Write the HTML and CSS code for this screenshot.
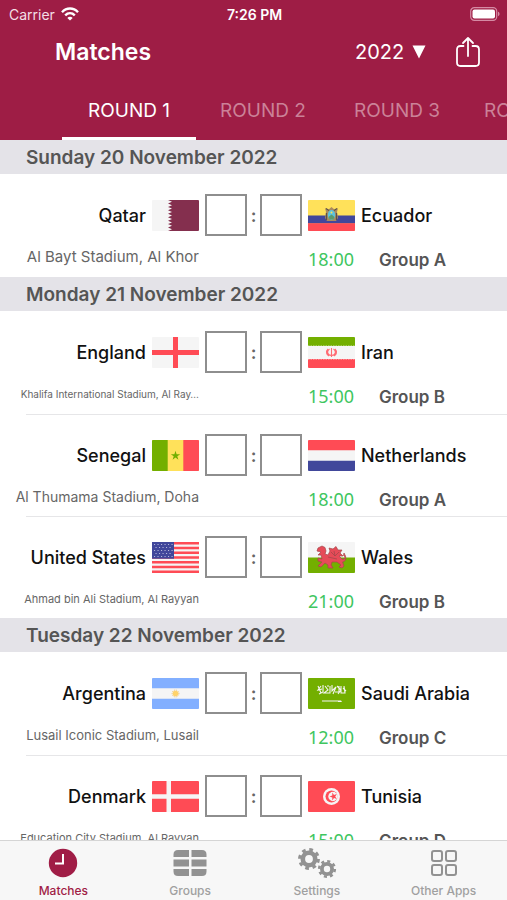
FILE: index.html
```html
<!DOCTYPE html>
<html lang="en">
<head>
  <meta charset="UTF-8" />
  <meta name="viewport" content="width=device-width, initial-scale=1.0"/>
  <title>Matches</title>
  <link rel="stylesheet" href="styles.css">
</head>
<body>
  <header class="header">
    <div class="status">
      <div class="carrier">
        <span>Carrier</span>
        <svg width="18" height="14" viewBox="0 0 18 14" fill="none" stroke="#fff" stroke-width="2.4">
          <path d="M1 5.2C5.500 .3 12.500 .3 17 5.200"/>
          <path d="M4.200 8.400C7 5.600 11 5.600 13.800 8.400"/>
          <path d="M9 13.600 6.300 10.900C7.800 9.400 10.200 9.400 11.700 10.900Z" fill="#fff" stroke="none"/>
        </svg>
      </div>
      <span class="clock">7:26 PM</span>
      <svg class="battery" width="30" height="14" viewBox="0 0 30 14">
        <rect x=".7" y=".7" width="26" height="12.600" rx="3.600" fill="none" stroke="#d58ba4" stroke-width="1.200"/>
        <rect x="2.500" y="2.400" width="22.500" height="9.200" rx="2" fill="#fff"/>
        <path d="M28 4.800C30 5.400 30 8.600 28 9.200Z" fill="#d58ba4"/>
      </svg>
    </div>

    <div class="toolbar">
      <h1>Matches</h1>
      <label class="year">
        <select aria-label="Year">
          <option>2022</option>
        </select>
        <svg width="14" height="14" viewBox="0 0 14 14"><path d="M.5 .5H13.500L7 13.500Z" fill="#fff"/></svg>
      </label>
      <button class="share" aria-label="Share">
        <svg width="26" height="32" viewBox="0 0 26 32" fill="none" stroke="#fff" stroke-width="1.800" stroke-linecap="round" stroke-linejoin="round">
          <path d="M8.500 10H5.500Q2 10 2 13.500V26.500Q2 30 5.500 30H20.500Q24 30 24 26.500V13.500Q24 10 20.500 10H17.500"/>
          <path d="M13 20V2M8 7 13 2 18 7"/>
        </svg>
      </button>
    </div>

    <nav class="rounds">
      <button class="round active">ROUND 1</button>
      <button class="round">ROUND 2</button>
      <button class="round">ROUND 3</button>
      <button class="round">ROUND OF 16</button>
    </nav>
  </header>

  <main class="list">
    <h2>Sunday 20 November 2022</h2>

    <div class="match">
      <div class="home">
        <span>Qatar</span>
        <svg class="flag" viewBox="0 0 47 31">
          <rect width="47" height="31" rx="1" fill="#f5f5f5"/>
          <path d="M46 0H16L20 1.700 16 3.400 20 5.200 16 6.900 20 8.600 16 10.300 20 12.100 16 13.800 20 15.500 16 17.200 20 18.900 16 20.700 20 22.400 16 24.100 20 25.800 16 27.600 20 29.300 16 31H46Q47 31 47 30V1Q47 0 46 0Z" fill="#842f4e"/>
        </svg>
      </div>
      <div class="score">
        <input type="text" aria-label="Qatar goals"><span>:</span><input type="text" aria-label="Ecuador goals">
      </div>
      <div class="away">
        <svg class="flag" viewBox="0 0 47 31">
          <rect width="47" height="31" rx="1" fill="#ffe15a"/>
          <rect y="15.500" width="47" height="8" fill="#41479b"/>
          <path d="M0 23.300H47V30Q47 31 46 31H1Q0 31 0 30Z" fill="#ff4b55"/>
          <path d="M17 8 20 10 23.500 7 27 10 30 8 29 12 30 18 28 21H19L17 18 18 12Z" fill="#a98b60"/>
          <path d="M18 8.500 21 10.500M29 8.500 26 10.500M18.500 13V20M28.500 13V20" stroke="#5c5148" stroke-width="1.200"/>
          <ellipse cx="23.500" cy="15" rx="3.700" ry="5" fill="#5cc3de"/>
          <path d="M20.500 17 23.500 14.500 26.500 17 25.500 19.500H21.500Z" fill="#5b9a6c"/>
          <circle cx="23.500" cy="12.500" r="1" fill="#ffe15a"/>
        </svg>
        <span>Ecuador</span>
      </div>
      <div class="stadium large">Al Bayt Stadium, Al Khor</div>
      <div class="info"><span class="time">18:00</span><span class="group">Group A</span></div>
    </div>

    <h2>Monday 21 November 2022</h2>

    <div class="match">
      <div class="home">
        <span>England</span>
        <svg class="flag" viewBox="0 0 47 31">
          <rect width="47" height="31" rx="1" fill="#f5f5f5"/>
          <path d="M21 0H26V13H47V18H26V31H21V18H0V13H21Z" fill="#ff4b55"/>
        </svg>
      </div>
      <div class="score">
        <input type="text" aria-label="England goals"><span>:</span><input type="text" aria-label="Iran goals">
      </div>
      <div class="away">
        <svg class="flag" viewBox="0 0 47 31">
          <rect width="47" height="31" rx="1" fill="#f5f5f5"/>
          <path d="M1 0H46Q47 0 47 1V9H0V1Q0 0 1 0Z" fill="#73af00"/>
          <path d="M0 22H47V30Q47 31 46 31H1Q0 31 0 30Z" fill="#ff4b55"/>
          <path d="M23.500 11V20M21.500 12C18.500 14 19 18 23.500 18.500C28 18 28.500 14 25.500 12M20 12C17.500 14.500 18.500 18 21 19M27 12C29.500 14.500 28.500 18 26 19" fill="none" stroke="#ff6b73" stroke-width="1.100"/>
          <path d="M0 8.800H47M0 22.200H47" stroke="#fff" stroke-width=".8" stroke-dasharray="1.500 1" opacity=".6"/>
        </svg>
        <span>Iran</span>
      </div>
      <div class="stadium tiny">Khalifa International Stadium, Al Ray…</div>
      <div class="info"><span class="time">15:00</span><span class="group">Group B</span></div>
    </div>

    <div class="match">
      <div class="home">
        <span>Senegal</span>
        <svg class="flag" viewBox="0 0 47 31">
          <rect width="47" height="31" rx="1" fill="#ffe15a"/>
          <path d="M1 0H15.700V31H1Q0 31 0 30V1Q0 0 1 0Z" fill="#73af00"/>
          <path d="M31.300 0H46Q47 0 47 1V30Q47 31 46 31H31.300Z" fill="#ff4b55"/>
          <path d="M23.500 10.800 24.600 14.200H28.200L25.300 16.300 26.400 19.700 23.500 17.600 20.600 19.700 21.700 16.300 18.800 14.200H22.400Z" fill="#73af00"/>
        </svg>
      </div>
      <div class="score">
        <input type="text" aria-label="Senegal goals"><span>:</span><input type="text" aria-label="Netherlands goals">
      </div>
      <div class="away">
        <svg class="flag" viewBox="0 0 47 31">
          <rect width="47" height="31" rx="1" fill="#f5f5f5"/>
          <path d="M1 0H46Q47 0 47 1V10.300H0V1Q0 0 1 0Z" fill="#ff4b55"/>
          <path d="M0 20.700H47V30Q47 31 46 31H1Q0 31 0 30Z" fill="#41479b"/>
        </svg>
        <span>Netherlands</span>
      </div>
      <div class="stadium">Al Thumama Stadium, Doha</div>
      <div class="info"><span class="time">18:00</span><span class="group">Group A</span></div>
    </div>

    <div class="match">
      <div class="home">
        <span>United States</span>
        <svg class="flag" viewBox="0 0 47 31">
          <rect width="47" height="31" rx="1" fill="#f5f5f5"/>
          <path d="M0 1.200H47M0 6H47M0 10.700H47M0 15.500H47M0 20.300H47M0 25H47M0 29.800H47" stroke="#ff4b55" stroke-width="2.400"/>
          <rect width="22" height="16.700" fill="#41479b"/>
          <path d="M2 2.500H21M3.500 5.500H20M2 8.500H21M3.500 11.500H20M2 14.500H21" stroke="#b5b8da" stroke-width="1.100" stroke-dasharray="1.100 2.400"/>
        </svg>
      </div>
      <div class="score">
        <input type="text" aria-label="United States goals"><span>:</span><input type="text" aria-label="Wales goals">
      </div>
      <div class="away">
        <svg class="flag" viewBox="0 0 47 31">
          <rect width="47" height="31" rx="1" fill="#f5f5f5"/>
          <path d="M0 15.500H47V30Q47 31 46 31H1Q0 31 0 30Z" fill="#73af00"/>
          <path d="M10 6 14 4 17 5.500 18 9 17 12 20 13 22 9 21 6 25 7 28 4.500 30 8 34 8 32 11 35 14 31 14 34 17C37 18 38 15 35.500 13.500L36 11 37.500 14C38.500 19 36 19.500 34.500 20L36 24 34 26 31 25 33 23 29 20 24 20 23 23 25 26 20 26 20 23 17 21 13 25 10 24 14 20 10 19 10 16 14 17 13 13 10 13 13 10 9 9Z" fill="#e64b58" stroke="#a3484b" stroke-width=".7"/>
          <path d="M23 10 27 14 31 10M20 15 29 17M26 9 27 14" fill="none" stroke="#a3484b" stroke-width=".8"/>
        </svg>
        <span>Wales</span>
      </div>
      <div class="stadium small">Ahmad bin Ali Stadium, Al Rayyan</div>
      <div class="info"><span class="time">21:00</span><span class="group">Group B</span></div>
    </div>

    <h2>Tuesday 22 November 2022</h2>

    <div class="match">
      <div class="home">
        <span>Argentina</span>
        <svg class="flag" viewBox="0 0 47 31">
          <rect width="47" height="31" rx="1" fill="#f5f5f5"/>
          <path d="M1 0H46Q47 0 47 1V10.300H0V1Q0 0 1 0Z" fill="#82afff"/>
          <path d="M0 20.700H47V30Q47 31 46 31H1Q0 31 0 30Z" fill="#82afff"/>
          <circle cx="23.500" cy="15.500" r="2.800" fill="#ffd36b"/>
          <circle cx="23.500" cy="15.500" r="3.400" fill="none" stroke="#f3c46b" stroke-width="1" stroke-dasharray="1 1"/>
        </svg>
      </div>
      <div class="score">
        <input type="text" aria-label="Argentina goals"><span>:</span><input type="text" aria-label="Saudi Arabia goals">
      </div>
      <div class="away">
        <svg class="flag" viewBox="0 0 47 31">
          <rect width="47" height="31" rx="1" fill="#73af00"/>
          <path d="M10 8 13 15M13 8 10 12 14 11M15 7V14L11 16M17 8 20 12 16 15H22V8M19 8H21M24 7V13L28 9 25 16M27 14H31V8M29 8 33 12 30 16M33 8V15H37L36 8M35 10 38 13" fill="none" stroke="#f5f5f5" stroke-width="1.100"/>
          <path d="M14 22.500H33L34 24H30V23.500H14Z" fill="#f5f5f5"/>
        </svg>
        <span>Saudi Arabia</span>
      </div>
      <div class="stadium medium">Lusail Iconic Stadium, Lusail</div>
      <div class="info"><span class="time">12:00</span><span class="group">Group C</span></div>
    </div>

    <div class="match">
      <div class="home">
        <span>Denmark</span>
        <svg class="flag" viewBox="0 0 47 31">
          <rect width="47" height="31" rx="1" fill="#ff4b55"/>
          <path d="M14.500 0H19V13.200H47V17.800H19V31H14.500V17.800H0V13.200H14.500Z" fill="#f5f5f5"/>
        </svg>
      </div>
      <div class="score">
        <input type="text" aria-label="Denmark goals"><span>:</span><input type="text" aria-label="Tunisia goals">
      </div>
      <div class="away">
        <svg class="flag" viewBox="0 0 47 31">
          <rect width="47" height="31" rx="1" fill="#ff4b55"/>
          <circle cx="23.500" cy="15.500" r="8.500" fill="#f5f5f5"/>
          <circle cx="23.500" cy="15.500" r="6" fill="#ff4b55"/>
          <circle cx="25" cy="15.500" r="4.700" fill="#f5f5f5"/>
          <path d="M21.500 15.500 24.300 14.600V11.600L26 14 28.900 13.100 27.200 15.500 28.900 17.900 26 17 24.300 19.400V16.400Z" fill="#ff4b55"/>
        </svg>
        <span>Tunisia</span>
      </div>
      <div class="stadium small">Education City Stadium, Al Rayyan</div>
      <div class="info"><span class="time">15:00</span><span class="group">Group D</span></div>
    </div>
  </main>

  <nav class="tabbar">
    <a href="#" class="tab selected">
      <svg width="40" height="32" viewBox="0 0 40 32">
        <circle cx="20" cy="16" r="14.200" fill="#a01d46"/>
        <path d="M20 7V16.500H12" fill="none" stroke="#fff" stroke-width="2"/>
      </svg>
      Matches
    </a>
    <a href="#" class="tab">
      <svg width="40" height="32" viewBox="0 0 40 32" fill="#929292">
        <path d="M8 3H19V10H3.500V7.500Q3.500 3 8 3ZM21.500 3H32Q36.500 3 36.500 7.500V10H21.500ZM3.500 12.500H19V19.500H3.500ZM21.500 12.500H36.500V19.500H21.500ZM3.500 22H19V29H8Q3.500 29 3.500 24.500ZM21.500 22H36.500V24.500Q36.500 29 32 29H21.500Z"/>
      </svg>
      Groups
    </a>
    <a href="#" class="tab">
      <svg width="40" height="32" viewBox="0 0 40 32" fill="none" stroke="#929292">
        <circle cx="12" cy="12" r="6.200" stroke-width="4.600"/>
        <circle cx="12" cy="12" r="9.400" stroke-width="3" stroke-dasharray="3.700 3.680"/>
        <circle cx="30" cy="22" r="5.100" stroke-width="3.800"/>
        <circle cx="30" cy="22" r="7.800" stroke-width="2.600" stroke-dasharray="3.060 3.060"/>
      </svg>
      Settings
    </a>
    <a href="#" class="tab">
      <svg width="40" height="32" viewBox="0 0 40 32" fill="none" stroke="#929292" stroke-width="2">
        <rect x="8" y="4" width="10" height="10" rx="2"/>
        <rect x="22" y="4" width="10" height="10" rx="2"/>
        <rect x="8" y="18" width="10" height="10" rx="2"/>
        <rect x="22" y="18" width="10" height="10" rx="2"/>
      </svg>
      Other Apps
    </a>
  </nav>
</body>
</html>
```

FILE: styles.css
```css
* {
  box-sizing: border-box;
}

body {
  margin: 0;
  height: 100vh;
  display: flex;
  flex-direction: column;
  overflow: hidden;
  font-family: Inter, "Liberation Sans", sans-serif;
  background-color: #fff;
  color: #111;
}

button, input, select {
  font-family: inherit;
  color: inherit;
  background: none;
  border: none;
  border-radius: 0;
  padding: 0;
  margin: 0;
}

svg {
  display: block;
  flex: none;
}

/* header */
.header {
  background-color: #9e1d45;
  color: #fff;
}

.status {
  display: grid;
  grid-template-columns: 1fr auto 1fr;
  align-items: center;
  height: 28px;
  padding: 0 7px 0 9px;
  font-size: 14px;
}

.carrier {
  display: flex;
  align-items: center;
  gap: 6px;
  color: #f3dfe5;
}

.clock {
  font-weight: 600;
}

.battery {
  justify-self: end;
}

.toolbar {
  display: flex;
  align-items: center;
  height: 52px;
  padding: 0 26px 4px 55px;
}

h1 {
  flex: 1;
  margin: 0;
  font-size: 23px;
  font-weight: 600;
}

.year {
  display: flex;
  align-items: center;
  gap: 7px;
}

.year select {
  appearance: none;
  font-size: 20px;
}

.share {
  margin-left: 29px;
  cursor: pointer;
}

.rounds {
  display: flex;
  height: 60px;
  padding-left: 62px;
  overflow: hidden;
}

.round {
  flex: none;
  min-width: 134px;
  padding: 0 20px;
  font-size: 19px;
  border-top: 3px solid transparent;
  border-bottom: 3px solid transparent;
  color: #cb8298;
  cursor: pointer;
}

.round.active {
  color: #fff;
  border-bottom-color: #fff;
}

/* matches */
.list {
  flex: 1;
  min-height: 0;
  overflow: hidden;
}

h2 {
  margin: 0;
  padding: 2px 0 0 26px;
  font-size: 19px;
  font-weight: 600;
  line-height: 32px;
  color: #555;
  background-color: #e4e3e8;
}

.match {
  position: relative;
  display: grid;
  grid-template-columns: minmax(0, 1fr) 97px minmax(0, 1fr);
  align-content: start;
  column-gap: 6px;
  row-gap: 10px;
  padding-top: 20px;
  height: 103px;
}

.match + .match {
  height: 102px;
}

.match + .match::before {
  content: "";
  position: absolute;
  top: 0;
  left: 26px;
  right: 0;
  height: 1px;
  background-color: #e6e6e8;
}

.home, .away {
  display: flex;
  align-items: center;
  gap: 6px;
  font-size: 18px;
  font-weight: 500;
  white-space: nowrap;
}

.home {
  justify-content: flex-end;
}

.flag {
  width: 47px;
  height: 31px;
}

.score {
  display: flex;
  align-items: center;
  justify-content: space-between;
  font-size: 18px;
  font-weight: 600;
  color: #666;
}

.score input {
  width: 42px;
  height: 42px;
  border: 2px solid #8e8e8e;
  text-align: center;
  font-size: 20px;
}

.stadium {
  margin-left: 15px;
  white-space: nowrap;
  text-align: right;
  font-size: 14px;
  line-height: 22px;
  color: #666;
}

.stadium.large {
  font-size: 15px;
}

.stadium.medium {
  font-size: 13px;
}

.stadium.small {
  font-size: 11px;
}

.stadium.tiny {
  font-size: 10px;
}

.info {
  grid-column: 3;
  display: flex;
  align-items: baseline;
  line-height: 26px;
}

.time {
  width: 71px;
  font-family: "Noto Sans", sans-serif;
  font-size: 18px;
  color: #3fc65f;
}

.group {
  font-size: 17px;
  font-weight: 600;
  color: #555;
}

/* bottom bar */
.tabbar {
  display: grid;
  grid-template-columns: repeat(4, 1fr);
  height: 60px;
  padding-top: 6px;
  background-color: #f7f7f7;
  border-top: 1px solid #d5d5d5;
}

.tab {
  display: flex;
  flex-direction: column;
  align-items: center;
  gap: 4px;
  font-size: 12px;
  font-weight: 500;
  line-height: 16px;
  text-decoration: none;
  color: #a0a0a0;
}

.tab.selected {
  color: #a01d46;
}
```
